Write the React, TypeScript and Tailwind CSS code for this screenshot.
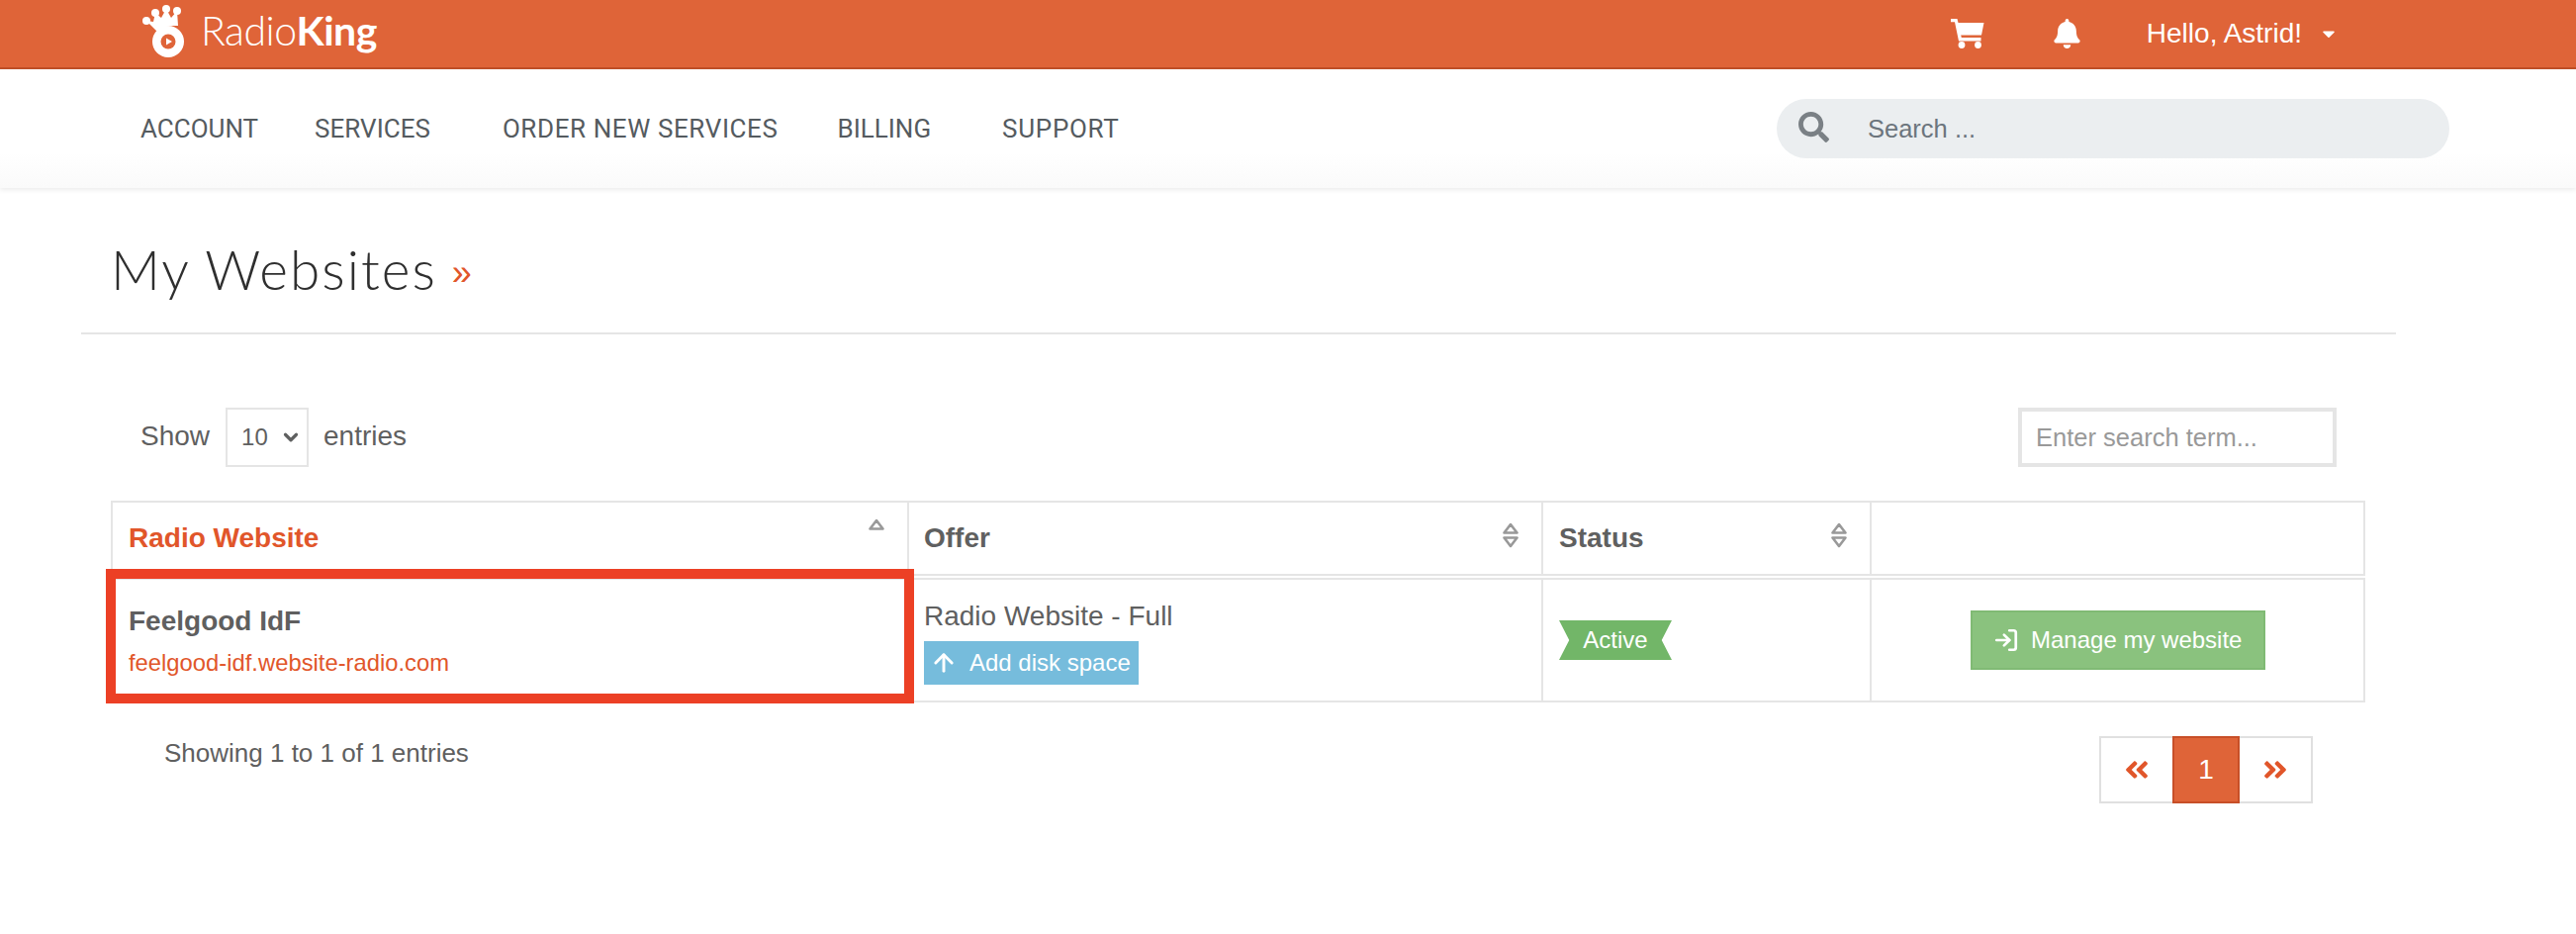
import React from 'react';
import { FaBell, FaSearch, FaCaretDown, FaAngleDoubleLeft, FaAngleDoubleRight } from 'react-icons/fa';
import { ArrowUp, LogIn, ChevronDown } from 'lucide-react';

const Logo: React.FC = () => (
  <svg width="60" height="64" viewBox="0 0 60 64" className="shrink-0 -mt-[4px]">
    <g fill="#fff">
      <circle cx="12" cy="21" r="4" />
      <circle cx="21" cy="13" r="4" />
      <circle cx="32" cy="9" r="4" />
      <circle cx="43" cy="11" r="4" />
      <path d="M12 21 L19 22 L21 13 L27 18 L32 9 L37 18 L43 11 L44 26 L34 26 L24 33 Z" />
      <circle cx="34" cy="42" r="16" />
    </g>
    <circle cx="34" cy="42" r="7.5" fill="#df6438" />
    <path d="M32 38.5 L38 42 L32 45.5 Z" fill="#fff" />
  </svg>
);

const Cart: React.FC = () => (
  <svg width="34" height="30" viewBox="0 0 34 30" className="ml-auto shrink-0" fill="#fff">
    <path d="M0 0 H6.5 L7.5 4 H33.5 L31 16.5 H10.2 L10.8 19 H30.5 V22.5 H8 L4 3.2 H0 Z" />
    <circle cx="11" cy="26.5" r="3.4" />
    <circle cx="27.5" cy="26.5" r="3.4" />
  </svg>
);

const SortIcon: React.FC<{ up?: boolean; down?: boolean }> = ({ up, down }) => (
  <svg width="18" height="26" viewBox="0 0 18 26" fill="none" stroke="#999" strokeWidth="2.6" strokeLinejoin="round">
    {up && <path d="M9 2 L15.5 10.5 L2.5 10.5 Z" />}
    {down && <path d="M9 24 L15.5 15.5 L2.5 15.5 Z" />}
  </svg>
);

const navItems = [
  { label: 'ACCOUNT', cls: 'ml-[142px]' },
  { label: 'SERVICES', cls: 'ml-[57px]' },
  { label: 'ORDER NEW SERVICES', cls: 'ml-[73px] tracking-[0.6px]' },
  { label: 'BILLING', cls: 'ml-[60px]' },
  { label: 'SUPPORT', cls: 'ml-[72px] tracking-[0.7px]' },
];

const App: React.FC = () => {
  return (
    <div className="min-h-[944px] bg-white font-['Liberation_Sans',Arial,sans-serif] text-[26px] text-[#5f6060] overflow-hidden">
      {/* Top bar */}
      <div className="h-[70px] bg-[#df6438] border-b-2 border-[#c04f28] flex items-center text-white">
        <div className="ml-[136px] flex items-center">
          <Logo />
          <span className="ml-[7px] font-['Lato',sans-serif] text-[41px] leading-none font-light tracking-[-0.5px] -mt-[8px]">
            Radio<span className="font-bold">King</span>
          </span>
        </div>
        <Cart />
        <FaBell className="ml-[70px] w-[27px] h-[30px]" />
        <span className="ml-[67px] leading-none text-[28px]">Hello, Astrid!</span>
        <FaCaretDown className="ml-[17px] mr-[240px] w-[20px] h-[20px]" />
      </div>

      {/* Nav */}
      <div className="h-[120px] flex items-center bg-gradient-to-b from-white from-70% to-[#fafafa] shadow-[0_2px_5px_rgba(0,0,0,0.08)] relative">
        {navItems.map((item) => (
          <span key={item.label} className={`${item.cls} font-['Roboto',sans-serif] text-[26px] text-[#555b5f] whitespace-nowrap`}>
            {item.label}
          </span>
        ))}
        <div className="ml-auto mr-[128px] w-[680px] h-[60px] rounded-full bg-[#ebeef0] flex items-center text-[#6c757d]">
          <FaSearch className="ml-[22px] -mt-[4px] w-[31px] h-[31px] text-[#7a8085]" />
          <span className="ml-[39px] text-[25.5px]">Search ...</span>
        </div>
      </div>

      {/* Title */}
      <div className="h-[146px] flex items-center pl-[112px] pt-[18px]">
        <h1 className="font-['Lato',sans-serif] font-light text-[55px] leading-none text-[#2f2f2f] tracking-[2px]">My Websites</h1>
        <span className="ml-[15px] mt-[8px] text-[36px] leading-none text-[#e1562a]">»</span>
      </div>
      <div className="ml-[82px] w-[2340px] h-[2px] bg-[#e5e5e5]" />

      {/* Filters */}
      <div className="mt-[74px] ml-[142px] w-[2220px] h-[60px] flex items-center">
        <span className="text-[28px] -mt-[3px]">Show</span>
        <div className="ml-[16px] w-[84px] h-[60px] border-2 border-[#e5e5e5] flex items-center pl-[14px] text-[24px]">
          10
          <ChevronDown className="ml-[12px] w-[22px] h-[22px]" strokeWidth={3.5} />
        </div>
        <span className="ml-[15px] text-[28px] -mt-[3px]">entries</span>
        <div className="ml-auto w-[322px] h-[60px] border-4 border-[#e5e5e5] flex items-center pl-[14px] text-[25.5px] text-[#999]">
          Enter search term...
        </div>
      </div>

      {/* Table */}
      <div className="relative mt-[34px] ml-[112px] w-[2279px]">
        <div className="grid grid-cols-[803px_641px_332px_499px] h-[76px] border-2 border-[#e5e5e5] font-bold text-[28px]">
          <div className="flex items-center justify-between pl-[16px] pr-[22px] text-[#e1562a]">
            Radio Website
            <div className="-mt-[14px]"><SortIcon up /></div>
          </div>
          <div className="flex items-center justify-between pl-[15px] pr-[22px] border-l-2 border-[#e5e5e5]">
            Offer
            <div className="-mt-[6px]"><SortIcon up down /></div>
          </div>
          <div className="flex items-center justify-between pl-[16px] pr-[22px] border-l-2 border-[#e5e5e5]">
            Status
            <div className="-mt-[6px]"><SortIcon up down /></div>
          </div>
          <div className="border-l-2 border-[#e5e5e5]" />
        </div>

        <div className="mt-[2px] grid grid-cols-[803px_641px_332px_499px] h-[126px] border-2 border-[#e5e5e5]">
          <div className="flex flex-col pl-[16px] pt-[23px]">
            <span className="font-bold text-[28px] leading-[38px] text-[#5f5f5f]">Feelgood IdF</span>
            <span className="mt-[6px] text-[23.8px] leading-[34px] text-[#e1562a]">feelgood-idf.website-radio.com</span>
          </div>
          <div className="border-l-2 border-[#e5e5e5] pl-[15px] pt-[19px]">
            <div className="leading-[36px] text-[28px]">Radio Website - Full</div>
            <div className="mt-[7px] w-[217px] h-[44px] bg-[#76bcdc] flex items-center text-white text-[24px]">
              <ArrowUp className="ml-[6px] w-[28px] h-[28px]" strokeWidth={2.5} />
              <span className="ml-[12px]">Add disk space</span>
            </div>
          </div>
          <div className="border-l-2 border-[#e5e5e5] pl-[16px] flex items-center">
            <div className="w-[114px] h-[40px] bg-[#72b668] flex items-center justify-center text-white text-[24px] [clip-path:polygon(0_0,100%_0,91%_50%,100%_100%,0_100%,9%_50%)]">
              Active
            </div>
          </div>
          <div className="border-l-2 border-[#e5e5e5] flex items-center pl-[100px]">
            <div className="w-[298px] h-[60px] bg-[#8ac27e] border-2 border-[#80ba74] flex items-center text-white text-[24px]">
              <LogIn className="ml-[21px] w-[26px] h-[26px]" strokeWidth={2.5} />
              <span className="ml-[12px] whitespace-nowrap">Manage my website</span>
            </div>
          </div>
        </div>

        {/* highlight annotation */}
        <div className="absolute left-[-5px] top-[69px] w-[817px] h-[136px] border-10 border-[#ec4025]" />
      </div>

      {/* Footer */}
      <div className="mt-[34px] ml-[166px] w-[2172px] h-[68px] flex items-start justify-between">
        <span className="mt-[-2px]">Showing 1 to 1 of 1 entries</span>
        <div className="flex h-[68px]">
          <div className="w-[74px] border-2 border-r-0 border-[#e0e0e0] flex items-center justify-center text-[#e1562a]">
            <FaAngleDoubleLeft className="w-[28px] h-[28px]" />
          </div>
          <div className="w-[68px] bg-[#df6438] border-2 border-[#c74f28] flex items-center justify-center text-white text-[28px]">1</div>
          <div className="w-[74px] border-2 border-l-0 border-[#e0e0e0] flex items-center justify-center text-[#e1562a]">
            <FaAngleDoubleRight className="w-[28px] h-[28px]" />
          </div>
        </div>
      </div>
    </div>
  );
};

export default App;
